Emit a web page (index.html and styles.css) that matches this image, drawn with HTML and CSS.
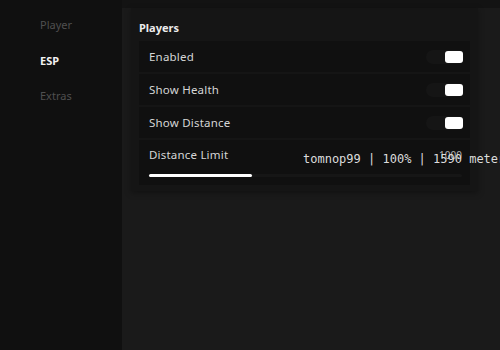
FILE: index.html
```html
<!DOCTYPE html>
<html lang="en">
<head>
  <meta charset="UTF-8">
  <title>ESP</title>
  <link rel="stylesheet" href="styles.css">
</head>
<body>
  <div class="app">
    <!-- Sidebar tabs -->
    <div class="sidebar">
      <div class="tab">Player</div>
      <div class="tab active">ESP</div>
      <div class="tab">Extras</div>
    </div>

    <!-- Content -->
    <div class="main">
      <div class="topbar"></div>
      <div class="section">
        <div class="section-title">Players</div>
        <div class="row">
          <span>Enabled</span>
          <div class="toggle on"><div class="knob"></div></div>
        </div>
        <div class="row">
          <span>Show Health</span>
          <div class="toggle on"><div class="knob"></div></div>
        </div>
        <div class="row">
          <span>Show Distance</span>
          <div class="toggle on"><div class="knob"></div></div>
        </div>
        <div class="row slider-row">
          <div class="slider-head">
            <span>Distance Limit</span>
            <span class="value">1000</span>
          </div>
          <div class="track"><div class="fill" style="width: 33%"></div></div>
        </div>
      </div>
    </div>
  </div>

  <div class="watermark">tomnop99 | 100% | 1590 meters</div>
</body>
</html>
```

FILE: styles.css
```css
body {
  margin: 0;
  background-color: #1a1a1a;
  font-family: "Noto Sans", sans-serif;
  overflow: hidden;
}
.app {
  display: flex;
  width: 500px;
  height: 350px;
}
.sidebar {
  width: 122px;
  background-color: #101010;
  padding-top: 16px;
  box-shadow: 2px 0 4px rgba(0, 0, 0, 0.3);
}
.tab {
  color: #4f4f4f;
  font-size: 11px;
  padding-left: 40px;
  height: 35.5px;
  line-height: 18px;
}
.tab.active {
  color: #f2f2f2;
  font-weight: bold;
}
.main {
  flex: 1;
  background-color: #1a1a1a;
}
.topbar {
  height: 8px;
  background-color: #131313;
}
.section {
  margin: 0 22px 0 9px;
  background-color: #151515;
  padding: 12px 8px 4px 8px;
  box-shadow: 0 2px 6px rgba(0, 0, 0, 0.35);
}
.section-title {
  color: #ececec;
  font-size: 11px;
  font-weight: bold;
  margin-bottom: 6px;
}
.row {
  display: flex;
  align-items: center;
  justify-content: space-between;
  background-color: #101010;
  height: 31px;
  margin-bottom: 2px;
  padding: 0 6px 0 10px;
  color: #d6d6d6;
  font-size: 11.5px;
  letter-spacing: 0.2px;
}
.toggle {
  width: 38px;
  height: 14px;
  background-color: #151515;
  border-radius: 7px;
  display: flex;
  justify-content: flex-end;
  align-items: center;
}
.knob {
  width: 18px;
  height: 12px;
  background-color: #ffffff;
  border-radius: 3px;
  margin-right: 1px;
}
.slider-row {
  display: block;
  height: auto;
  padding: 8px 8px 8px 10px;
}
.slider-head {
  display: flex;
  justify-content: space-between;
  line-height: 14px;
}
.value {
  font-size: 10px;
  color: #b0b0b0;
  letter-spacing: 0;
}
.track {
  margin-top: 12px;
  height: 3px;
  background-color: #161616;
  border-radius: 2px;
}
.fill {
  height: 3px;
  background-color: #ffffff;
  border-radius: 2px;
}
.watermark {
  position: absolute;
  left: 303px;
  top: 152px;
  color: #dcdcdc;
  font-family: "DejaVu Sans Mono", monospace;
  font-size: 12px;
  white-space: nowrap;
}
```
